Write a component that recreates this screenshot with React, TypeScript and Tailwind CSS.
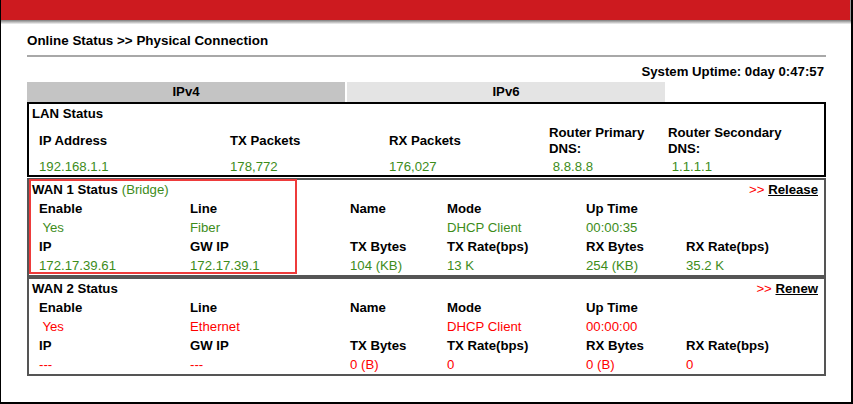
import React from "react";

const G = "text-[#3d8c1a]";
const R = "text-[#ff0000]";

function WanBox({
  title,
  sub,
  action,
  vals,
  color,
  highlight,
  className,
}: {
  title: string;
  sub?: string;
  action: string;
  vals: string[];
  color: string;
  highlight?: boolean;
  className?: string;
}) {
  const widths = ["w-[151px]", "w-[160px]", "w-[97px]", "w-[139px]", "w-[100px]", "flex-1"];
  const row1 = ["Enable", "Line", "Name", "Mode", "Up Time", ""];
  const row3 = ["IP", "GW IP", "TX Bytes", "TX Rate(bps)", "RX Bytes", "RX Rate(bps)"];
  const r2 = vals.slice(0, 6);
  const r4 = vals.slice(6, 12);
  return (
    <div className={`relative border-2 border-[#555555] ${className ?? ""}`}>
      {highlight && (
        <div className="absolute left-0 top-[-1px] w-[268px] h-[95px] border-2 border-[#ee3b3b] pointer-events-none" />
      )}
      <div className="flex items-center h-[19px] pl-[3px] pr-[6px]">
        <span className="font-bold">{title}</span>
        {sub && <span className={`${G} ml-[4px]`}>{sub}</span>}
        <span className="ml-auto">
          <span className={R}>&gt;&gt;</span>{" "}
          <span className="font-bold underline">{action}</span>
        </span>
      </div>
      {[row1, r2, row3, r4].map((row, ri) => (
        <div key={ri} className="flex items-center h-[19px] pl-[10px]">
          {row.map((t, i) => (
            <div
              key={i}
              className={`${widths[i]} whitespace-pre ${ri % 2 === 0 ? "font-bold" : color}`}
            >
              {t}
            </div>
          ))}
        </div>
      ))}
    </div>
  );
}

export default function App() {
  const lanHead = ["IP Address", "TX Packets", "RX Packets", "Router Primary\nDNS:", "Router Secondary\nDNS:"];
  const lanVals = ["192.168.1.1", "178,772", "176,027", " 8.8.8.8", " 1.1.1.1"];
  const lanW = ["w-[191px]", "w-[159px]", "w-[160px]", "w-[119px]", "flex-1"];
  return (
    <div className="relative w-[853px] h-[404px] bg-white border-l border-r-2 border-b-2 border-black text-[13.2px] leading-[16px] text-black font-['Liberation_Sans',Arial,sans-serif] overflow-hidden">
      <div className="h-[20px] bg-[#cd1a1f] border-r border-[#9a9a9a]" />
      <div className="h-[4px] bg-gradient-to-b from-[#7d7d7d] to-[#f4f4f4]" />
      <div className="pl-[26px] pr-[25px]">
        <div className="mt-[9px] font-bold h-[16px] text-[13.4px]">Online Status &gt;&gt; Physical Connection</div>
        <div className="mt-[6px] border-t-2 border-[#a8a8a8]" />
        <div className="mt-[7px] text-right font-bold pr-[2px] h-[16px]">System Uptime: 0day 0:47:57</div>
        <div className="mt-[2px] flex h-[20px] font-bold">
          <div className="w-[318px] bg-[#c4c4c4] flex items-center justify-center">IPv4</div>
          <div className="ml-[2px] w-[318px] bg-[#e4e4e4] flex items-center justify-center">IPv6</div>
        </div>
        <div className="border-2 border-black h-[75px]">
          <div className="pt-[2px] pl-[3px] font-bold h-[18px]">LAN Status</div>
          <div className="mt-[3px] flex items-center h-[32px] pl-[10px] font-bold">
            {lanHead.map((t, i) => (
              <div key={i} className={`${lanW[i]} whitespace-pre-line`}>
                {t}
              </div>
            ))}
          </div>
          <div className="mt-[2px] flex items-center h-[16px] pl-[10px]">
            {lanVals.map((t, i) => (
              <div key={i} className={`${lanW[i]} whitespace-pre ${G}`}>
                {t}
              </div>
            ))}
          </div>
        </div>
        <WanBox
          className="mt-[1px]"
          title="WAN 1 Status"
          sub="(Bridge)"
          action="Release"
          color={G}
          highlight
          vals={[" Yes", "Fiber", "", "DHCP Client", "00:00:35", "", "172.17.39.61", "172.17.39.1", "104 (KB)", "13 K", "254 (KB)", "35.2 K"]}
        />
        <WanBox
          title="WAN 2 Status"
          action="Renew"
          color={R}
          vals={[" Yes", "Ethernet", "", "DHCP Client", "00:00:00", "", "---", "---", "0 (B)", "0", "0 (B)", "0"]}
        />
      </div>
    </div>
  );
}
